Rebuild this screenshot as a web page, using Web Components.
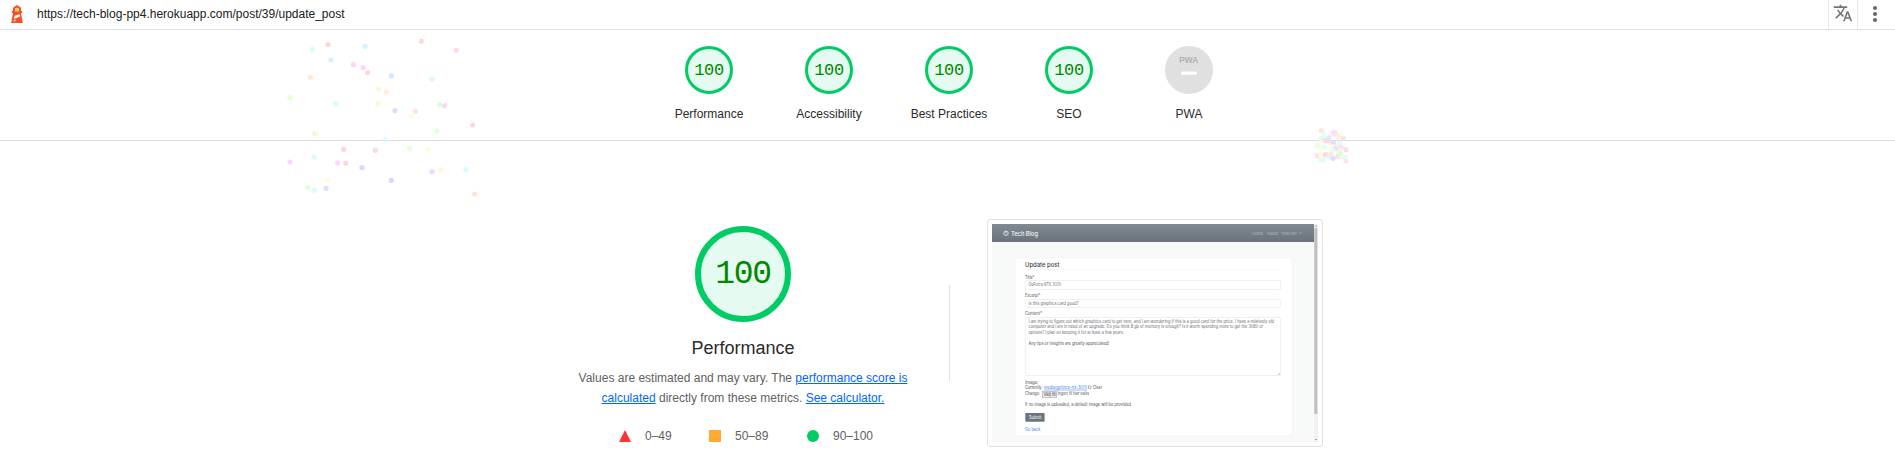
<!DOCTYPE html>
<html lang="en">
<head>
<meta charset="utf-8">
<title>Lighthouse Report</title>
<style>
body{margin:0;background:#fff;font-family:"Liberation Sans",Arial,sans-serif;font-size:12px;color:#2a2a2a;overflow:hidden}
</style>
</head>
<body>
<lh-report></lh-report>
<script>
const define = (name, html, setup) => customElements.define(name, class extends HTMLElement {
  constructor(){
    super();
    this.attachShadow({mode:'open'});
  }
  connectedCallback(){
    const t = document.createElement('template');
    t.innerHTML = html;
    this.shadowRoot.replaceChildren(t.content.cloneNode(true));
    if (setup) setup(this, this.shadowRoot);
  }
});

define('lh-topbar', `
<style>
:host{display:flex;align-items:stretch;box-sizing:border-box;height:30px;border-bottom:1px solid #e0e0e0;padding-left:11px}
.logo{margin-top:5px;width:12px;height:18px;flex:none}
.url{margin-left:14px;flex:1;line-height:28px;color:#212121}
.tr{width:28px;border:solid #e8e8e8;border-width:0 1px;display:flex;justify-content:center;align-items:flex-start;padding-top:1px;box-sizing:content-box;height:28px}
.tr svg{width:20px;height:20px;display:block;margin-top:2px}
.more{width:37px;display:flex;justify-content:flex-start}
.more svg{width:24px;height:28px;margin-left:5px}
</style>
<svg class="logo" viewBox="0 0 12 18"><path d="M6 0l4 2.700V6h1.200v2H10l1.800 10H.2L2 8H.8V6H2V2.700z" fill="#f4502b"/><path d="M4 3.500L6 2.600l2 .9V6.500H4z" fill="#ffd45e"/><path d="M3.600 10.800l5-1.600.4 2.300-6 2.600z" fill="#fff"/><path d="M2.700 15.300l2-.8.3 1.200-2.500 1z" fill="#fbd0c5"/></svg>
<span class="url"><slot></slot></span>
<span class="tr"><svg viewBox="0 0 24 24" fill="#757575"><path d="M12.870 15.070l-2.540-2.510.03-.03c1.740-1.940 2.980-4.170 3.710-6.530H17V4h-7V2H8v2H1v1.990h11.170C11.500 7.920 10.440 9.750 9 11.350 8.070 10.320 7.300 9.190 6.690 8h-2c.73 1.630 1.730 3.170 2.980 4.560l-5.090 5.020L4 19l5-5 3.110 3.110.76-2.040zM18.500 10h-2L12 22h2l1.120-3h4.750L21 22h2l-4.500-12zm-2.620 7l1.620-4.330L19.120 17h-3.240z"/></svg></span>
<span class="more"><svg viewBox="0 0 24 28" fill="#6a6a6a"><circle cx="12" cy="8" r="2.100"/><circle cx="12" cy="14" r="2.100"/><circle cx="12" cy="20" r="2.100"/></svg></span>
`);

define('lh-gauge', `
<style>
:host{display:flex;flex-direction:column;align-items:center;width:120px}
.c{box-sizing:border-box;width:48px;height:48px;border:3px solid #0c6;border-radius:50%;background:#e5faf0;color:#080;display:flex;align-items:center;justify-content:center;font:17px/20px "Liberation Mono",monospace;letter-spacing:-.4px;padding-top:1px}
.l{margin-top:12px;line-height:16px}
:host([large]){width:auto}
:host([large]) .c{width:96px;height:96px;border-width:6px;font-size:33px;line-height:36px;letter-spacing:-1.3px;padding-top:2px}
:host([large]) .l{font-size:18px;line-height:24px;margin-top:14px}
</style>
<div class="c"></div><div class="l"><slot></slot></div>
`, (h, r) => r.querySelector('.c').textContent = h.getAttribute('score'));

define('lh-pwa', `
<style>
:host{display:flex;flex-direction:column;align-items:center;width:120px}
svg{width:48px;height:48px;display:block}
.l{margin-top:12px;line-height:16px}
</style>
<svg viewBox="0 0 48 48"><circle cx="24" cy="24" r="24" fill="#e0e0e0"/><text x="14.300" y="16.500" textLength="19" lengthAdjust="spacingAndGlyphs" font-family="Liberation Sans, sans-serif" font-weight="700" font-size="9.500" fill="#b0b0b0">PWA</text><rect x="16" y="25.500" width="16" height="3.300" rx="1.600" fill="#fff"/></svg>
<div class="l"><slot></slot></div>
`);

define('lh-scores', `
<style>
:host{display:flex;justify-content:center;box-sizing:border-box;height:111px;padding:16px 0 0 3px;border-bottom:1px solid #dcdcdc}
</style><slot></slot>
`);

define('lh-scale', `
<style>
:host{display:flex;align-items:center;height:16px;color:#616161;width:max-content}
svg{width:12px;height:12px;margin-right:14px}
</style>
<svg viewBox="0 0 12 12"></svg><slot></slot>
`, (h, r) => {
  r.querySelector('svg').innerHTML = {
    fail:'<path d="M6 0l6 12H0z" fill="#f33"/>',
    average:'<path d="M0 0h12v12H0z" fill="#fa3"/>',
    pass:'<circle cx="6" cy="6" r="6" fill="#0c6"/>'
  }[h.getAttribute('kind')];
});

define('lh-summary', `
<style>
:host{display:flex;flex-direction:column;align-items:center;width:412px;padding-top:85px}
p{margin:8px 0 0;width:340px;text-align:center;line-height:20px;color:#616161}
a{color:#06f;text-decoration:underline}
.s{display:flex;margin-top:20px;align-self:flex-start;padding-left:82px}
.s>:nth-child(1){width:90px}.s>:nth-child(2){width:98px}
</style>
<lh-gauge large score="100">Performance</lh-gauge>
<p>Values are estimated and may vary. The <a>performance score is</a> <a>calculated</a> directly from these metrics. <a>See calculator.</a></p>
<div class="s"><lh-scale kind="fail">0–49</lh-scale><lh-scale kind="average">50–89</lh-scale><lh-scale kind="pass">90–100</lh-scale></div>
`);

define('lh-preview', `
<style>
:host{display:block;box-sizing:border-box;width:336px;height:228px;padding:4px;border:1px solid #e0e0e0;border-radius:3px}
svg{display:block;width:326px;height:218px}
</style>
<svg viewBox="0 0 326 218" font-family="Inter, sans-serif" font-size="4.400" fill="#4b4f52">
<defs><linearGradient id="g" x2="0" y2="1"><stop stop-color="#828a90"/><stop offset="1" stop-color="#69737b"/></linearGradient></defs>
<rect width="326" height="218" fill="#f7faf9"/>
<rect width="322" height="18" fill="url(#g)"/>
<rect x="322" width="4" height="218" fill="#f1f1f1"/><rect x="322.300" y="4" width="3" height="186" fill="#bfbfbf"/>
<path d="M323 2.500h2l-1-1.200zM323 215h2l-1 1.200z" fill="#777"/>
<circle cx="14" cy="9.200" r="2.200" fill="none" stroke="#e8eaeb" stroke-width=".9"/><path d="M14 7v2.500" stroke="#e8eaeb" stroke-width=".8"/>
<g id="t"></g>
</svg>
`, (h, r) => {
  const rows = [
    [19,11.700,27,'Tech Blog','#f8f9f9',6],
    [260,10.700,11,'Home','#b4b9bd',4],
    [275,10.700,11,'About','#b4b9bd',4],
    [289,10.700,16,'TestUser','#b4b9bd',4],
    [33,43,34.500,'Update post','#3d4246',6.200],
    [33,55,9.500,'Title*'],
    [36.500,62.200,32.500,'GeForce RTX 3070','#686c70'],
    [33,73.300,15.500,'Excerpt*'],
    [36.500,80.500,50,'Is this graphics card good?','#686c70'],
    [33,91,17,'Content*'],
    [36.500,98.500,245.500,'I am trying to figure out which graphics card to get next, and I am wondering if this is a good card for the price. I have a relatively old','#686c70'],
    [36.500,104.200,234.500,'computer and I am in need of an upgrade. Do you think 8 gb of memory is enough? Is it worth spending more to get the 3080 or','#686c70'],
    [36.500,109.600,95.500,'options? I plan on keeping it for at least a few years.','#686c70'],
    [36.500,121,80.500,'Any tips or insights are greatly appreciated!'],
    [33,159.500,12.500,'Image'],
    [33,165,17.500,'Currently:'],
    [52,165,43,'media/geforce-rtx-3070','#3b7bea'],
    [101,165,9,'Clear'],
    [33,171.300,15,'Change:'],
    [51.500,172,12,'Välj fil','#333'],
    [65.500,171.300,31.500,'Ingen fil har valts'],
    [33,182,106,'If no image is uploaded, a default image will be provided'],
    [37,195,12.500,'Submit','#fff'],
    [33,207.300,15.500,'Go back','#3b7bea']
  ];
  r.querySelector('#t').innerHTML = `
<path d="M23 34h277v178H23z" fill="#fff" stroke="#f0f2f2" stroke-width=".6"/>
<path d="M33 45.500h255" stroke="#f1f1f1" stroke-width=".6"/>
<g fill="#fff" stroke="#e9ebec" stroke-width=".8"><rect x="33.300" y="56.500" width="255.300" height="9" rx="1"/><rect x="33.300" y="75.500" width="255.300" height="8" rx="1"/><rect x="33.300" y="93.500" width="255.300" height="58" rx="1"/></g>
<path d="M286 150.800l1.800-1.800M287.200 150.900l.7-.7" stroke="#888" stroke-width=".5"/>
<rect x="50.500" y="167.500" width="14.200" height="6.300" fill="#ececec" stroke="#999" stroke-width=".5"/>
<rect x="96.500" y="162" width="2.600" height="2.600" fill="#fff" stroke="#777" stroke-width=".5"/>
<path d="M52 166h43" stroke="#3b7bea" stroke-width=".5"/>
<rect x="33.300" y="189" width="19.300" height="8.800" rx=".8" fill="#6c757d"/>
<path d="M307.300 8.600h2.400l-1.200 1.200z" fill="#b4b9bd"/>` +
    rows.map(([x,y,w,s,c,f]) => `<text x="${x}" y="${y}" textLength="${w}" lengthAdjust="spacingAndGlyphs"${c?` fill="${c}"`:''}${f?` font-size="${f}"`:''}${f>5?' font-weight="500"':''}>${s}</text>`).join('');
});

define('lh-category', `
<style>
:host{display:flex;padding-left:537px}
.d{width:1px;height:96px;background:#e0e0e0;margin-top:144px;flex:none}
lh-preview{margin:78px 0 0 37px;flex:none}
</style>
<lh-summary></lh-summary><div class="d"></div><lh-preview></lh-preview>
`);

define('lh-confetti', `
<style>
:host{position:absolute;left:0;top:0;width:1895px;height:467px;pointer-events:none}
svg{display:block;width:100%;height:100%}
</style><svg viewBox="0 0 1895 467"></svg>
`, (h, r) => {
  // Each particle: x, y (in thirds of a pixel from the burst origin), hue.
  const wide = [[174,59,5],[127,73,160],[285,64,203],[454,49,5],[559,76,318],[183,105,208],[250,119,325],[279,128,328],[293,143,5],[364,152,218],[121,157,28],[486,163,145],[325,192,47],[349,201,38],[60,218,95],[197,236,145],[325,236,85],[375,257,268],[436,259,20],[422,274,58],[509,239,140],[524,242,318],[608,300,345],[501,318,105],[135,326,200],[139,326,58],[346,344,183],[221,373,0],[316,376,340],[419,370,100],[474,373,58],[133,397,160],[60,411,290],[203,414,300],[227,414,345],[276,428,250],[486,440,280],[512,434,48],[588,434,182],[171,466,60],[364,466,245],[113,487,100],[133,496,183],[168,490,225],[614,507,20]];
  const tight = [[64,47,15],[72,60,175],[103,55,310,1],[120,59,90],[113,66,30],[130,70,310],[62,70,175],[71,71,170],[87,68,215],[52,92,95],[61,83,50],[75,77,330],[84,77,340],[73,95,160],[94,88,45],[100,83,250],[95,95,55],[118,85,150],[110,97,30],[124,96,310],[138,104,340],[106,101,270],[65,110,60],[98,106,180],[120,108,100],[108,114,60],[52,122,290],[63,122,60],[76,120,310],[77,119,0],[85,125,190],[92,117,20],[99,130,240],[113,124,290],[124,125,45],[135,127,175],[61,135,90],[69,135,160],[138,138,20],[120,115,120]];
  const dot = (ox, oy, light) => ([x,y,hue,big]) => `<circle cx="${(ox+x/3).toFixed(1)}" cy="${(oy+y/3).toFixed(1)}" r="${big?3.4:2.6}" fill="hsla(${hue},100%,${light}%,.8)"/>`;
  r.querySelector('svg').innerHTML = wide.map(dot(270,25,90)).join('') + tight.map(dot(1300,115,92)).join('');
});

define('lh-report', `
<style>:host{display:block;position:relative;height:467px;overflow:hidden}</style>
<lh-topbar>https://tech-blog-pp4.herokuapp.com/post/39/update_post</lh-topbar>
<lh-scores>
<lh-gauge score="100">Performance</lh-gauge><lh-gauge score="100">Accessibility</lh-gauge><lh-gauge score="100">Best Practices</lh-gauge><lh-gauge score="100">SEO</lh-gauge><lh-pwa>PWA</lh-pwa>
</lh-scores>
<lh-category></lh-category>
<lh-confetti></lh-confetti>
`);
</script>
</body>
</html>
